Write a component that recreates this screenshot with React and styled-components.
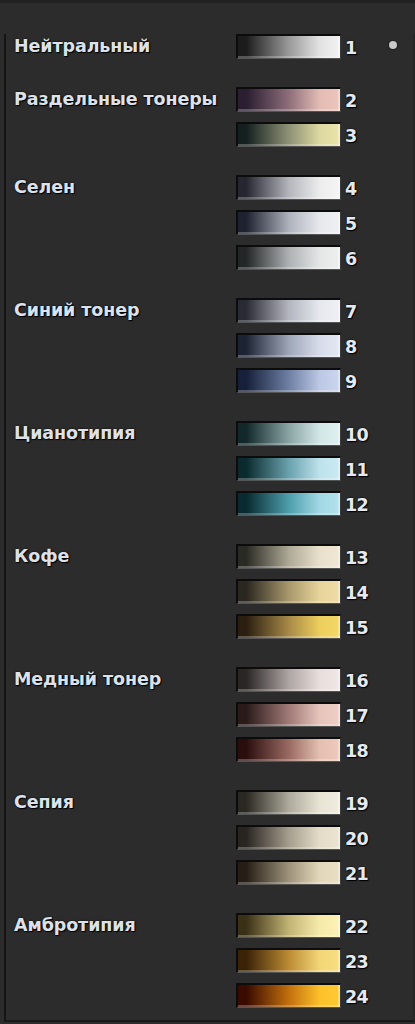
import React from "react";
import styled, { createGlobalStyle } from "styled-components";

const Global = createGlobalStyle`
  html, body { margin: 0; padding: 0; background: #2b2b2b; }
  body { font-family: "DejaVu Sans", Verdana, sans-serif; }
`;

const Panel = styled.div`
  width: 415px;
  height: 1024px;
  box-sizing: border-box;
  background: #2c2c2c;
  border-top: 3px solid #222;
  padding: 31px 0 0 4px;
  overflow: hidden;
`;

const Inner = styled.div`
  border-left: 2px solid #151515;
  border-bottom: 2px solid #1a1a1a;
  border-right: 2px solid #262626;
  height: 988px;
  box-sizing: border-box;
  padding-left: 8px;
  display: flex;
  flex-direction: column;
  gap: 28px;
`;

const Group = styled.div`
  display: flex;
  flex-direction: column;
  gap: 10px;
`;

const Row = styled.div`
  display: flex;
  align-items: center;
  height: 25px;
`;

const Label = styled.div`
  width: 222px;
  flex: none;
  color: #dde2ea;
  font-family: "DejaVu Sans", Verdana, sans-serif;
  font-weight: bold;
  font-size: 17.5px;
  letter-spacing: -0.1px;
  text-shadow: 1px 1px 1px #000, 0 0 2px #000;
  white-space: nowrap;
  margin-top: -2px;
`;

const Swatch = styled.div`
  width: 105px;
  height: 25px;
  flex: none;
  box-sizing: border-box;
  border-top: 2px solid #0c0c0c;
  border-left: 2px solid #0c0c0c;
  border-right: 1px solid #3a3a3a;
  border-bottom: 1px solid #555;
  box-shadow: inset 0 -2px 0 rgba(255, 255, 255, 0.25), inset -2px 0 0 rgba(255,255,255,0.35);
  background: ${(p) => p.$g};
`;

const Num = styled.div`
  width: 32px;
  flex: none;
  padding-left: 4px;
  color: #e6eaf0;
  font-family: "DejaVu Sans", Verdana, sans-serif;
  font-weight: bold;
  font-size: 17.5px;
  letter-spacing: -0.8px;
  text-shadow: 1px 1px 1px #000, 0 0 2px #000;
  padding-top: 3px;
`;

const Dot = styled.div`
  width: 8px;
  height: 8px;
  border-radius: 50%;
  background: #c9c9c9;
  margin-left: 12px;
  margin-top: -4px;
  box-shadow: 0 0 2px #000;
`;

const g = (a, b, c, d) =>
  `linear-gradient(to right, ${a} 0%, ${a} 8%, ${b} 50%, ${c} 80%, ${d} 100%)`;

const groups = [
  { name: "Нейтральный", items: [g("#1c1c1c", "#9a9a9a", "#e2e2e2", "#f2f2f2")] },
  {
    name: "Раздельные тонеры",
    items: [
      g("#2a1e30", "#8e6e7a", "#e2bcb4", "#ecc6bc"),
      g("#14201f", "#8e9276", "#dcd8a0", "#ebe4aa"),
    ],
  },
  {
    name: "Селен",
    items: [
      g("#262630", "#b4b6bc", "#ececec", "#f4f4f4"),
      g("#1e2230", "#aeb2bc", "#e6e8ec", "#f0f0f2"),
      g("#222626", "#aeb2b4", "#e4e6e6", "#eeefef"),
    ],
  },
  {
    name: "Синий тонер",
    items: [
      g("#2a2a34", "#b4b6c0", "#e6e8ee", "#eff0f4"),
      g("#1c2434", "#9ea6b8", "#d8dcea", "#e4e8f2"),
      g("#16203a", "#6e80a4", "#bcc8e4", "#cbd6ee"),
    ],
  },
  {
    name: "Цианотипия",
    items: [
      g("#12282a", "#8aa4a4", "#d2e6e6", "#e0f0f0"),
      g("#0a2a2e", "#6aa2ae", "#bde2ec", "#cbeaf2"),
      g("#082a30", "#4e9eac", "#a2d8e4", "#b4e2ec"),
    ],
  },
  {
    name: "Кофе",
    items: [
      g("#2a2a24", "#aeaa96", "#e8e0ca", "#f0e8d4"),
      g("#2a2620", "#a8996c", "#e6d49a", "#eedca6"),
      g("#2a1e10", "#a88a48", "#ecce5c", "#f4d866"),
    ],
  },
  {
    name: "Медный тонер",
    items: [
      g("#2a2626", "#aea6a4", "#e8dedc", "#f0e8e6"),
      g("#2a1a1a", "#a07a76", "#e6c4bc", "#eecec6"),
      g("#2a0e0e", "#9a6a62", "#e4c0b2", "#eecabc"),
    ],
  },
  {
    name: "Сепия",
    items: [
      g("#2a2822", "#aeaa9c", "#e8e4d4", "#f0ecde"),
      g("#282420", "#a69e8e", "#e4dcc8", "#ece4d2"),
      g("#261e16", "#9e927a", "#e2d6ba", "#eadec4"),
    ],
  },
  {
    name: "Амбротипия",
    items: [
      g("#3a3016", "#c2b474", "#f6eaaa", "#fcf2b6"),
      g("#3a2206", "#bc8c34", "#f2d676", "#f8de82"),
      g("#380a00", "#c2700c", "#fcc02a", "#ffca34"),
    ],
  },
];

export default function App() {
  let n = 0;
  return (
    <>
      <Global />
      <Panel>
        <Inner>
          {groups.map((grp) => (
            <Group key={grp.name}>
              {grp.items.map((grad, i) => {
                n += 1;
                return (
                  <Row key={n}>
                    <Label>{i === 0 ? grp.name : ""}</Label>
                    <Swatch $g={grad} />
                    <Num>{n}</Num>
                    {n === 1 && <Dot />}
                  </Row>
                );
              })}
            </Group>
          ))}
        </Inner>
      </Panel>
    </>
  );
}
